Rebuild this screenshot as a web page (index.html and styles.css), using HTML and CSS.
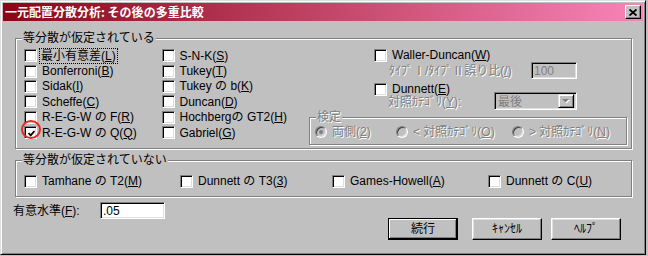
FILE: index.html
```html
<!DOCTYPE html>
<html lang="ja">
  <head>
    <meta charset="UTF-8" />
    <title>一元配置分散分析: その後の多重比較</title>
    <link rel="stylesheet" href="styles.css">
  </head>
  <body>
    <div class="window">
      <div class="titlebar">
        <span class="title">一元配置分散分析: その後の多重比較</span>
        <span class="close">
          <svg width="8" height="7" viewBox="0 0 8 7"><path d="M0.5 0.5 L7.5 6.5 M7.5 0.5 L0.5 6.5" stroke="#000" stroke-width="1.8" fill="none" /></svg>
        </span>
      </div>

      <fieldset class="group group-equal">
        <legend>等分散が仮定されている</legend>
        <div class="cols">
          <div class="col col-1">
            <label class="check"><span class="box"></span><span class="focus">最小有意差(<u>L</u>)</span></label>
            <label class="check"><span class="box"></span><span>Bonferroni(<u>B</u>)</span></label>
            <label class="check"><span class="box"></span><span>Sidak(<u>I</u>)</span></label>
            <label class="check"><span class="box"></span><span>Scheffe(<u>C</u>)</span></label>
            <label class="check"><span class="box"></span><span>R-E-G-W の F(<u>R</u>)</span></label>
            <label class="check">
              <span class="box checked">
                <svg width="7" height="7" viewBox="0 0 7 7"><path d="M0.5 3 L2.7 5.3 L6.5 1" stroke="#000" stroke-width="1.8" fill="none" /></svg>
                <span class="mark"></span>
              </span>
              <span>R-E-G-W の Q(<u>Q</u>)</span>
            </label>
          </div>
          <div class="col col-2">
            <label class="check"><span class="box"></span><span>S-N-K(<u>S</u>)</span></label>
            <label class="check"><span class="box"></span><span>Tukey(<u>T</u>)</span></label>
            <label class="check"><span class="box"></span><span>Tukey の b(<u>K</u>)</span></label>
            <label class="check"><span class="box"></span><span>Duncan(<u>D</u>)</span></label>
            <label class="check"><span class="box"></span><span>Hochbergの GT2(<u>H</u>)</span></label>
            <label class="check"><span class="box"></span><span>Gabriel(<u>G</u>)</span></label>
          </div>
          <div class="col-3">
            <div class="sub">
              <label class="check"><span class="box"></span><span>Waller-Duncan(<u>W</u>)</span></label>
              <div class="field-row">
                <span class="field-label disabled">ﾀｲﾌﾟⅠ/ﾀｲﾌﾟⅡ誤り比(<u>/</u>)</span>
                <span class="text-box off">100</span>
              </div>
              <label class="check check-dunnett"><span class="box"></span><span>Dunnett(<u>E</u>)</span></label>
              <div class="field-row select-row">
                <span class="field-label disabled">対照ｶﾃｺﾞﾘ(<u>Y</u>):</span>
                <span class="select">
                  <span class="select-value">最後</span>
                  <span class="select-btn">
                    <svg width="8" height="5" viewBox="0 0 8 5"><path d="M1 1 H8 L4.5 4.5 Z" fill="#fff" /><path d="M0 0 H7 L3.5 3.5 Z" fill="#808080" /></svg>
                  </span>
                </span>
              </div>
            </div>
            <fieldset class="group group-test">
              <legend class="disabled">検定</legend>
              <div class="radios">
                <span class="radio-item"><span class="radio on"></span><span class="disabled">両側(<u>2</u>)</span></span>
                <span class="radio-item"><span class="radio"></span><span class="disabled">&lt; 対照ｶﾃｺﾞﾘ(<u>O</u>)</span></span>
                <span class="radio-item"><span class="radio"></span><span class="disabled">&gt; 対照ｶﾃｺﾞﾘ(<u>N</u>)</span></span>
              </div>
            </fieldset>
          </div>
        </div>
      </fieldset>

      <fieldset class="group group-unequal">
        <legend>等分散が仮定されていない</legend>
        <div class="cols">
          <label class="check w156"><span class="box"></span><span>Tamhane の T2(<u>M</u>)</span></label>
          <label class="check w152"><span class="box"></span><span>Dunnett の T3(<u>3</u>)</span></label>
          <label class="check w156"><span class="box"></span><span>Games-Howell(<u>A</u>)</span></label>
          <label class="check"><span class="box"></span><span>Dunnett の C(<u>U</u>)</span></label>
        </div>
      </fieldset>

      <div class="footer">
        <div class="level">
          <span class="level-label">有意水準(<u>F</u>):</span>
          <span class="text-box level-box">.05</span>
        </div>
        <div class="buttons">
          <span class="btn default">続行</span>
          <span class="btn">ｷｬﾝｾﾙ</span>
          <span class="btn">ﾍﾙﾌﾟ</span>
        </div>
      </div>
    </div>
  </body>
</html>
```

FILE: styles.css
```css
* {
  box-sizing: border-box;
}
body {
  margin: 0;
  background-color: #c0c0c0;
  font-family: "Liberation Sans", "Noto Sans CJK JP", sans-serif;
  font-size: 12px;
  line-height: 14px;
  color: #000000;
}
u {
  text-decoration: underline;
}
.window {
  width: 646px;
  height: 255px;
  padding: 2px;
  background-color: #c0c0c0;
  border: 1px solid;
  border-color: #dfdfdf #000000 #000000 #dfdfdf;
  box-shadow: inset 1px 1px 0 #ffffff, inset -1px -1px 0 #808080;
}
.titlebar {
  height: 18px;
  display: flex;
  align-items: center;
  padding: 0 2px;
  background: linear-gradient(90deg, #8a0616, #f884b8);
  color: #ffffff;
}
.title {
  flex: 1;
  font-family: "Noto Sans CJK JP", sans-serif;
  font-weight: bold;
}
.close {
  width: 16px;
  height: 14px;
  display: flex;
  align-items: center;
  justify-content: center;
  background-color: #c0c0c0;
  border: 1px solid;
  border-color: #ffffff #000000 #000000 #ffffff;
  box-shadow: inset -1px -1px 0 #808080;
}

/* group boxes */
.group {
  margin: 0 0 0 12px;
  width: 617px;
  min-width: 0;
  border: 1px solid #808080;
  box-shadow: 1px 1px 0 #ffffff, inset 1px 1px 0 #ffffff;
}
.group legend {
  margin-left: -2px;
  padding: 0 1px;
  background-color: #c0c0c0;
}
.group-equal {
  margin-top: 10px;
  height: 118px;
  padding: 3px 4px 0 8px;
}
.group-unequal {
  margin-top: 4px;
  height: 44px;
  padding: 6px 4px 0 8px;
}
.cols {
  display: flex;
}
.col {
  display: grid;
  grid-auto-rows: 15.4px;
  align-content: start;
}
.col-1 {
  width: 138px;
}
.col-2 {
  width: 148px;
}
.col-3 {
  flex: 1;
  display: flex;
  flex-direction: column;
}
.w156 {
  width: 156px;
}
.w152 {
  width: 152px;
}

/* checkboxes */
.check {
  display: flex;
  align-items: center;
  gap: 5px;
  white-space: nowrap;
}
.group-unequal .check {
  height: 16px;
}
.box {
  position: relative;
  flex: none;
  width: 13px;
  height: 13px;
  display: flex;
  align-items: center;
  justify-content: center;
  background-color: #ffffff;
  border: 1px solid;
  border-color: #808080 #ffffff #ffffff #808080;
  box-shadow: inset 1px 1px 0 #000000, inset -1px -1px 0 #dfdfdf;
}
.box svg {
  margin: 1px 0 0 1px;
}
.mark {
  position: absolute;
  left: -4px;
  top: -7px;
  width: 20px;
  height: 19px;
  border: 2px solid #e42a2a;
  border-radius: 50%;
}
.focus {
  margin-left: -3px;
  padding: 0 1px;
  border: 1px dotted #000000;
}

/* right column */
.sub {
  margin-left: 65px;
  display: flex;
  flex-direction: column;
  line-height: 12px;
}
.sub > .check {
  height: 14px;
}
.check-dunnett {
  margin-top: 3px;
}
.field-row {
  display: flex;
  align-items: center;
  height: 17px;
}
.field-label {
  width: 157px;
  padding-left: 15px;
  white-space: nowrap;
}
.select-row {
  margin-top: -4px;
  height: 18px;
}
.select-row .field-label {
  width: 120px;
  padding-left: 14px;
  margin-top: 2px;
}
.disabled {
  color: #808080;
  text-shadow: 1px 1px 0 #ffffff;
}
.text-box {
  display: flex;
  align-items: center;
  width: 46px;
  height: 17px;
  padding-left: 2px;
  background-color: #ffffff;
  border: 1px solid;
  border-color: #808080 #ffffff #ffffff #808080;
  box-shadow: inset 1px 1px 0 #000000, inset -1px -1px 0 #dfdfdf;
}
.text-box.off {
  background-color: #c0c0c0;
  color: #808080;
}
.select {
  display: flex;
  align-items: center;
  width: 83px;
  height: 18px;
  padding: 2px;
  background-color: #c0c0c0;
  border: 1px solid;
  border-color: #808080 #ffffff #ffffff #808080;
  box-shadow: inset 1px 1px 0 #000000, inset -1px -1px 0 #dfdfdf;
}
.select-value {
  flex: 1;
  padding-left: 1px;
  color: #808080;
  font-family: "Noto Sans CJK JP", sans-serif;
}
.select-btn {
  width: 16px;
  height: 14px;
  display: flex;
  align-items: center;
  justify-content: center;
  border: 1px solid;
  border-color: #dfdfdf #000000 #000000 #dfdfdf;
  box-shadow: inset 1px 1px 0 #ffffff, inset -1px -1px 0 #808080;
}

/* 検定 */
.group-test {
  margin: 0;
  width: 318px;
  height: 35px;
  padding: 0 5px 4px 5px;
}
.group-test legend {
  margin-left: 1px;
}
.radios {
  display: flex;
  height: 16px;
  align-items: center;
}
.radio-item {
  display: flex;
  align-items: center;
  gap: 5px;
  white-space: nowrap;
}
.radio-item:nth-child(1) {
  width: 81px;
}
.radio-item:nth-child(2) {
  width: 116px;
}
.radio {
  flex: none;
  width: 12px;
  height: 12px;
  display: flex;
  align-items: center;
  justify-content: center;
  border-radius: 50%;
  background-color: #c0c0c0;
  border: 1px solid;
  border-color: #808080 #ffffff #ffffff #808080;
  box-shadow: inset 1px 1px 0 #404040, inset -1px -1px 0 #dfdfdf;
}
.radio.on::after {
  content: "";
  width: 4px;
  height: 4px;
  border-radius: 50%;
  background-color: #808080;
}

/* footer */
.footer {
  display: flex;
  margin-top: 5px;
  padding: 0 22px 0 10px;
}
.level {
  display: flex;
  align-items: center;
  height: 17px;
}
.level-label {
  width: 87px;
}
.level-box {
  width: 65px;
}
.buttons {
  margin-left: auto;
  margin-top: 16px;
  display: flex;
}
.btn {
  width: 70px;
  height: 22px;
  display: flex;
  align-items: center;
  justify-content: center;
  margin-left: 9px;
  border: 1px solid;
  border-color: #ffffff #000000 #000000 #ffffff;
  box-shadow: inset -1px -1px 0 #808080, inset 1px 1px 0 #dfdfdf;
}
.btn.default {
  margin-left: 0;
  margin-right: 5px;
  border-color: #000000;
  box-shadow: inset -1px -1px 0 #000000, inset 1px 1px 0 #ffffff, inset -2px -2px 0 #808080;
}
```
